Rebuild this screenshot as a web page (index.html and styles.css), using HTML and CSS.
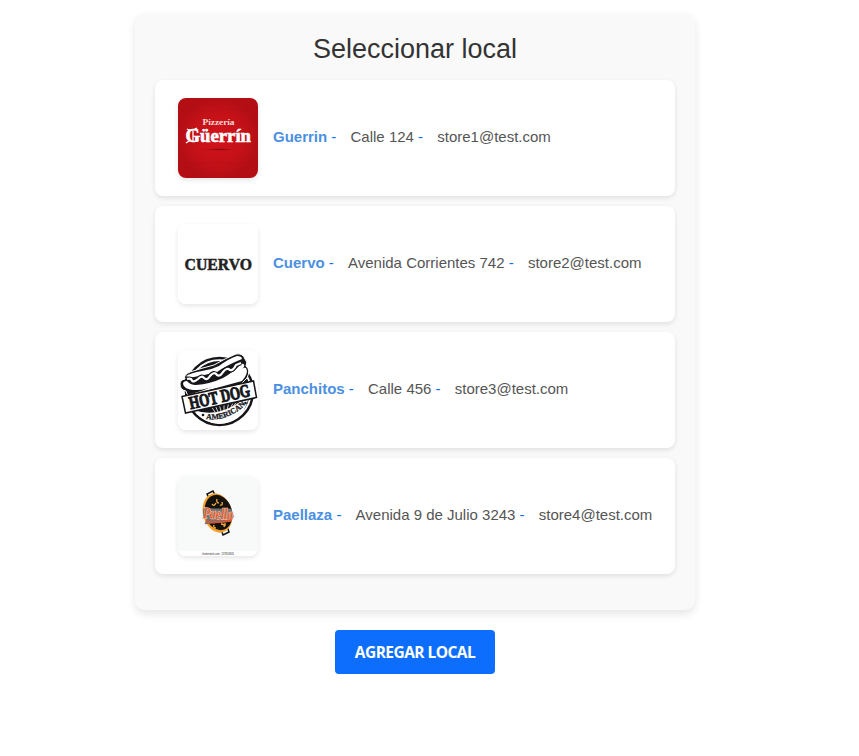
FILE: index.html
```html
<!DOCTYPE html>
<html lang="es">
<head>
<meta charset="utf-8">
<title>Seleccionar local</title>
<link rel="stylesheet" href="styles.css">
</head>
<body>
<main class="page">
<section class="panel">
<h2 class="title">Seleccionar local</h2>
<ul class="stores">
<li class="store">
<svg class="logo" viewBox="0 0 80 80">
<defs><radialGradient id="red"><stop offset="0" stop-color="#d3121b"/><stop offset=".65" stop-color="#c41118"/><stop offset="1" stop-color="#b40e15"/></radialGradient>
<radialGradient id="shade"><stop offset="0" stop-color="#850b10"/><stop offset="1" stop-color="#850b10" stop-opacity="0"/></radialGradient></defs>
<rect width="80" height="80" fill="url(#red)"/>
<path d="M0 14l18-2 15 2 20-3 27 2M0 64l21 2 17-3 18 3 24-3" stroke="#a80e14" stroke-opacity=".25" fill="none"/>
<ellipse cx="41" cy="51.500" rx="17" ry="1.300" fill="url(#shade)"/>
<text class="gothic" x="24.500" y="26.700" font-size="8.500" textLength="32" lengthAdjust="spacingAndGlyphs" fill="#f5d9d5">Pizzería</text>
<text class="gothic" x="7.500" y="44.300" font-size="18.500" textLength="65.500" lengthAdjust="spacingAndGlyphs" fill="#fff" stroke="#fff" stroke-width=".6">Güerrín</text>
<path d="M9 31q5 3 10-1M15 33v10M8 45l3-2" stroke="#fff" stroke-width="1.300" fill="none"/>
</svg>
<p class="info"><b class="name">Guerrin</b> - <span class="detail">Calle 124</span> - <span class="detail">store1@test.com</span></p>
</li>
<li class="store">
<svg class="logo" viewBox="0 0 80 80">
<rect width="80" height="80" fill="#fff"/>
<text class="gothic" x="6.500" y="45.500" font-size="16.500" textLength="67.500" lengthAdjust="spacingAndGlyphs" fill="#222" stroke="#222" stroke-width=".5">CUERVO</text>
</svg>
<p class="info"><b class="name">Cuervo</b> - <span class="detail">Avenida Corrientes 742</span> - <span class="detail">store2@test.com</span></p>
</li>
<li class="store">
<svg class="logo" viewBox="0 0 80 80">
<rect width="80" height="80" fill="#fff"/>
<circle cx="41.500" cy="41.500" r="33.500" fill="#fff" stroke="#17171b" stroke-width="2.500"/>
<circle cx="41.500" cy="41.500" r="30.500" fill="#17171b"/>
<path d="M2 34Q2 30 7 29 5 25 12 22 24 18 36 15 48 8 58 4q7-1 9 5 3 3 1 7 5 4 1 12l-9 9-48 10q-4-3-4-6Q2 40 2 34Z" fill="#17171b" stroke="#fff"/>
<path d="M8 26q5-3 16-5 9-1 17-5Q50 9 59 6q5 0 5 3-15 6-25 13-12 3-23 5-6 1-8-1Z" fill="#fff"/>
<path d="M5 34q0-3 4-3 3 4 9 4 14-1 27-7 12-7 18-14 4-1 3 3-9 10-22 16Q27 41 15 40 6 39 5 34Z" fill="#fff"/>
<path d="M13 44Q34 39 54 25q11-9 14-7 3 5-4 13L20 43Z" fill="#fff"/>
<path d="M9 29q4-1 5 1.500t6-1.500q4-4 6-1 3 3 6-2 4-5 7-1 3 2 6-3 4-5 7-2 3 1 6-5l5-2" fill="none" stroke="#17171b" stroke-width="4.500"/>
<path d="M9 29q4-1 5 1.500t6-1.500q4-4 6-1 3 3 6-2 4-5 7-1 3 2 6-3 4-5 7-2 3 1 6-5l5-2" fill="none" stroke="#fff" stroke-width="2.200"/>
<path d="M33 56l4 6M37 55l3 7M41 54l2 7M46 53v8M51 52l-2 8M56 51l-4 8M60 50l-6 8" stroke="#fff" stroke-width=".8"/>
<path d="M16 60Q40 69 66 49l4 1Q64 73 41 74 25 73 16 60Z" fill="#fff"/>
<path id="arc" d="M28 69Q50 72 68 54" fill="none"/>
<text class="gothic" font-size="7.800" fill="#17171b" stroke="#17171b" stroke-width=".3"><textPath href="#arc">AMERICAN</textPath></text>
<circle cx="25" cy="65" r="1.300" fill="#17171b"/><circle cx="67.500" cy="53" r="1.300" fill="#17171b"/>
<path d="M4 46.500L75.500 31l3 16.500L7.500 63Z" fill="#fff" stroke="#17171b" stroke-width="1.500"/>
<text class="gothic" transform="translate(12.500 59.300) rotate(-12.500)" font-size="18" textLength="62" lengthAdjust="spacingAndGlyphs" fill="#17171b" stroke="#17171b" stroke-width="1">HOT DOG</text>
</svg>
<p class="info"><b class="name">Panchitos</b> - <span class="detail">Calle 456</span> - <span class="detail">store3@test.com</span></p>
</li>
<li class="store">
<svg class="logo" viewBox="0 0 80 80">
<rect width="80" height="80" fill="#f8fafa"/>
<rect y="75" width="80" height="5" fill="#fff"/>
<path d="M31 22l-2-4 6-3 2 4M44 56l1 3 6-3-2-6" fill="none" stroke="#111" stroke-width="1.500"/>
<ellipse cx="39.500" cy="37" rx="14.500" ry="20" transform="rotate(-16 39.500 37)" fill="#f3a12b"/>
<ellipse cx="40.500" cy="36.500" rx="13.500" ry="18" transform="rotate(-16 40.500 36.500)" fill="#15110e"/>
<path d="M34 28q2 3 4-1M39 23q-1 4 2 4M42 29q3 1 2-3M36 49q-1 3 2 3M43 48q4 0 3 3M47 47v3" fill="none" stroke="#f2b13c" stroke-width="1.300"/>
<g transform="rotate(3 40 39)">
<path d="M25 33l28-1 3 8-3 5-26 4 2-5-4-3Z" fill="#737373"/>
<text class="paella" x="25" y="43" font-size="16" textLength="30" lengthAdjust="spacingAndGlyphs" fill="#e0602f" stroke="#f5d6c2" stroke-width="1" paint-order="stroke">Paella</text>
<path d="M28 46.500q14 .5 26-3" stroke="#d9552f" stroke-width="2" fill="none"/>
</g>
<text class="caption" x="24" y="79" font-size="3.500" textLength="32" lengthAdjust="spacingAndGlyphs" fill="#222">shutterstock.com · 2178118631</text>
</svg>
<p class="info"><b class="name">Paellaza</b> - <span class="detail">Avenida 9 de Julio 3243</span> - <span class="detail">store4@test.com</span></p>
</li>
</ul>
</section>
<button class="add">AGREGAR LOCAL</button>
</main>
</body>
</html>
```
FILE: styles.css
```css
* { box-sizing: border-box; }
body { margin: 0; background: #fff; font-family: "Liberation Sans", Arial, sans-serif; }
.page { width: 560px; margin: 13px 0 0 135px; display: flex; flex-direction: column; align-items: center; }
.panel { width: 560px; height: 597px; padding: 20px; background: #f9f9f9; border-radius: 10px; box-shadow: 0 4px 8px rgba(0, 0, 0, .1); }
.title { margin: 0 0 15px; font-size: 27px; line-height: 32px; font-weight: 400; color: #333; text-align: center; }
.stores { list-style: none; margin: 0; padding: 0; display: flex; flex-direction: column; gap: 10px; }
.store { height: 116px; padding: 0 23px; display: flex; align-items: center; gap: 15px; background: #fff; border-radius: 8px; box-shadow: 0 2px 5px rgba(0, 0, 0, .1); }
.logo { width: 80px; height: 80px; flex: none; border-radius: 8px; box-shadow: 0 2px 5px rgba(0, 0, 0, .1); }
.info { margin: 0 0 2px; font-size: 15px; line-height: 22px; color: #0d6efd; white-space: nowrap; }
.name { color: #4a90e2; }
.detail { margin-left: 10px; color: #555; }
.gothic { font-family: "Liberation Serif", serif; font-weight: 700; }
.paella { font-family: "Liberation Serif", serif; font-weight: 700; font-style: italic; }
.caption { font-family: "Liberation Sans", sans-serif; }
.add { width: 160px; height: 44px; margin-top: 20px; padding: 0; border: 0; border-radius: 4px; background: #0d6efd; color: #fff; font: 700 15.5px "Open Sans", sans-serif; letter-spacing: -.55px; white-space: nowrap; }
```
